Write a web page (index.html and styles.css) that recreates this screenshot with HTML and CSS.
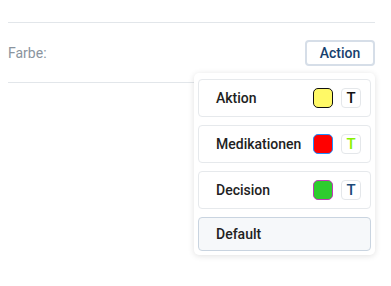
FILE: index.html
```html
<!DOCTYPE html>
<html>
	<head>
		<meta charset="UTF-8">
		<title>Farbe</title>
		<link rel="stylesheet" href="styles.css">
	</head>

	<body>
		<section class="field">
			<label class="field-label">Farbe:</label>
			<div class="picker">
				<button class="picker-btn">Action</button>
				<ul class="menu">
					<li class="menu-item">
						<span class="menu-name">Aktion</span>
						<span class="swatch swatch-yellow"></span>
						<span class="tcolor tcolor-black">T</span>
					</li>
					<li class="menu-item">
						<span class="menu-name">Medikationen</span>
						<span class="swatch swatch-red"></span>
						<span class="tcolor tcolor-lime">T</span>
					</li>
					<li class="menu-item">
						<span class="menu-name">Decision</span>
						<span class="swatch swatch-green"></span>
						<span class="tcolor tcolor-blue">T</span>
					</li>
					<li class="menu-item menu-default">
						<span class="menu-name">Default</span>
					</li>
				</ul>
			</div>
		</section>
	</body>

</html>
```

FILE: styles.css
```css
* {
	padding: 0;
	margin: 0;
	box-sizing: border-box;
}

html {
	height: 100%;
}

body {
	min-height: 100%;
	padding: 8px 16px 8px 8px;
	font-family: Roboto, "Liberation Sans", sans-serif;
	background: #fff;
}

.field {
	margin-top: 14px;
	height: 61px;
	border-top: 1px solid #e2e6ea;
	border-bottom: 1px solid #e2e6ea;
	display: flex;
	justify-content: space-between;
	align-items: center;
}

.field-label {
	font-size: 14px;
	color: #8a949e;
	margin-top: 1px;
}

.picker {
	position: relative;
}

.picker-btn {
	width: 70px;
	height: 26px;
	border: 2px solid #d6dee8;
	border-radius: 4px;
	background: #fff;
	color: #173f6e;
	font-family: inherit;
	font-size: 14px;
	font-weight: 500;
	margin-top: 1px;
}

.menu {
	position: absolute;
	right: 0;
	top: 34px;
	width: 181px;
	padding: 6px 4px 4px;
	list-style: none;
	background: #fff;
	border-radius: 5px;
	box-shadow: 0 1px 6px rgba(0, 0, 0, 0.12);
	display: flex;
	flex-direction: column;
	gap: 8px;
}

.menu-item {
	height: 38px;
	padding: 0 9px 0 17px;
	border: 1px solid #e6e9ec;
	border-radius: 4px;
	display: flex;
	align-items: center;
	gap: 8px;
}

.menu-name {
	flex: 1;
	font-size: 14px;
	font-weight: 500;
	color: #222;
}

.menu-default {
	height: 34px;
	background: #f6f8fa;
	border-color: #c9d4e0;
}

.swatch {
	width: 20px;
	height: 20px;
	border-radius: 5px;
	border: 1.5px solid;
}

.swatch-yellow {
	background: #fff966;
	border-color: #111;
}

.swatch-red {
	background: #ff0000;
	border-color: #1e8fff;
}

.swatch-green {
	background: #2ecc2e;
	border-color: #c038b8;
}

.tcolor {
	width: 20px;
	height: 20px;
	border: 1px solid #e4e7ea;
	border-radius: 4px;
	display: flex;
	align-items: center;
	justify-content: center;
	font-size: 15px;
	font-weight: 500;
}

.tcolor-black {
	color: #111;
}

.tcolor-lime {
	color: #88f000;
}

.tcolor-blue {
	color: #1b4a78;
}
```
